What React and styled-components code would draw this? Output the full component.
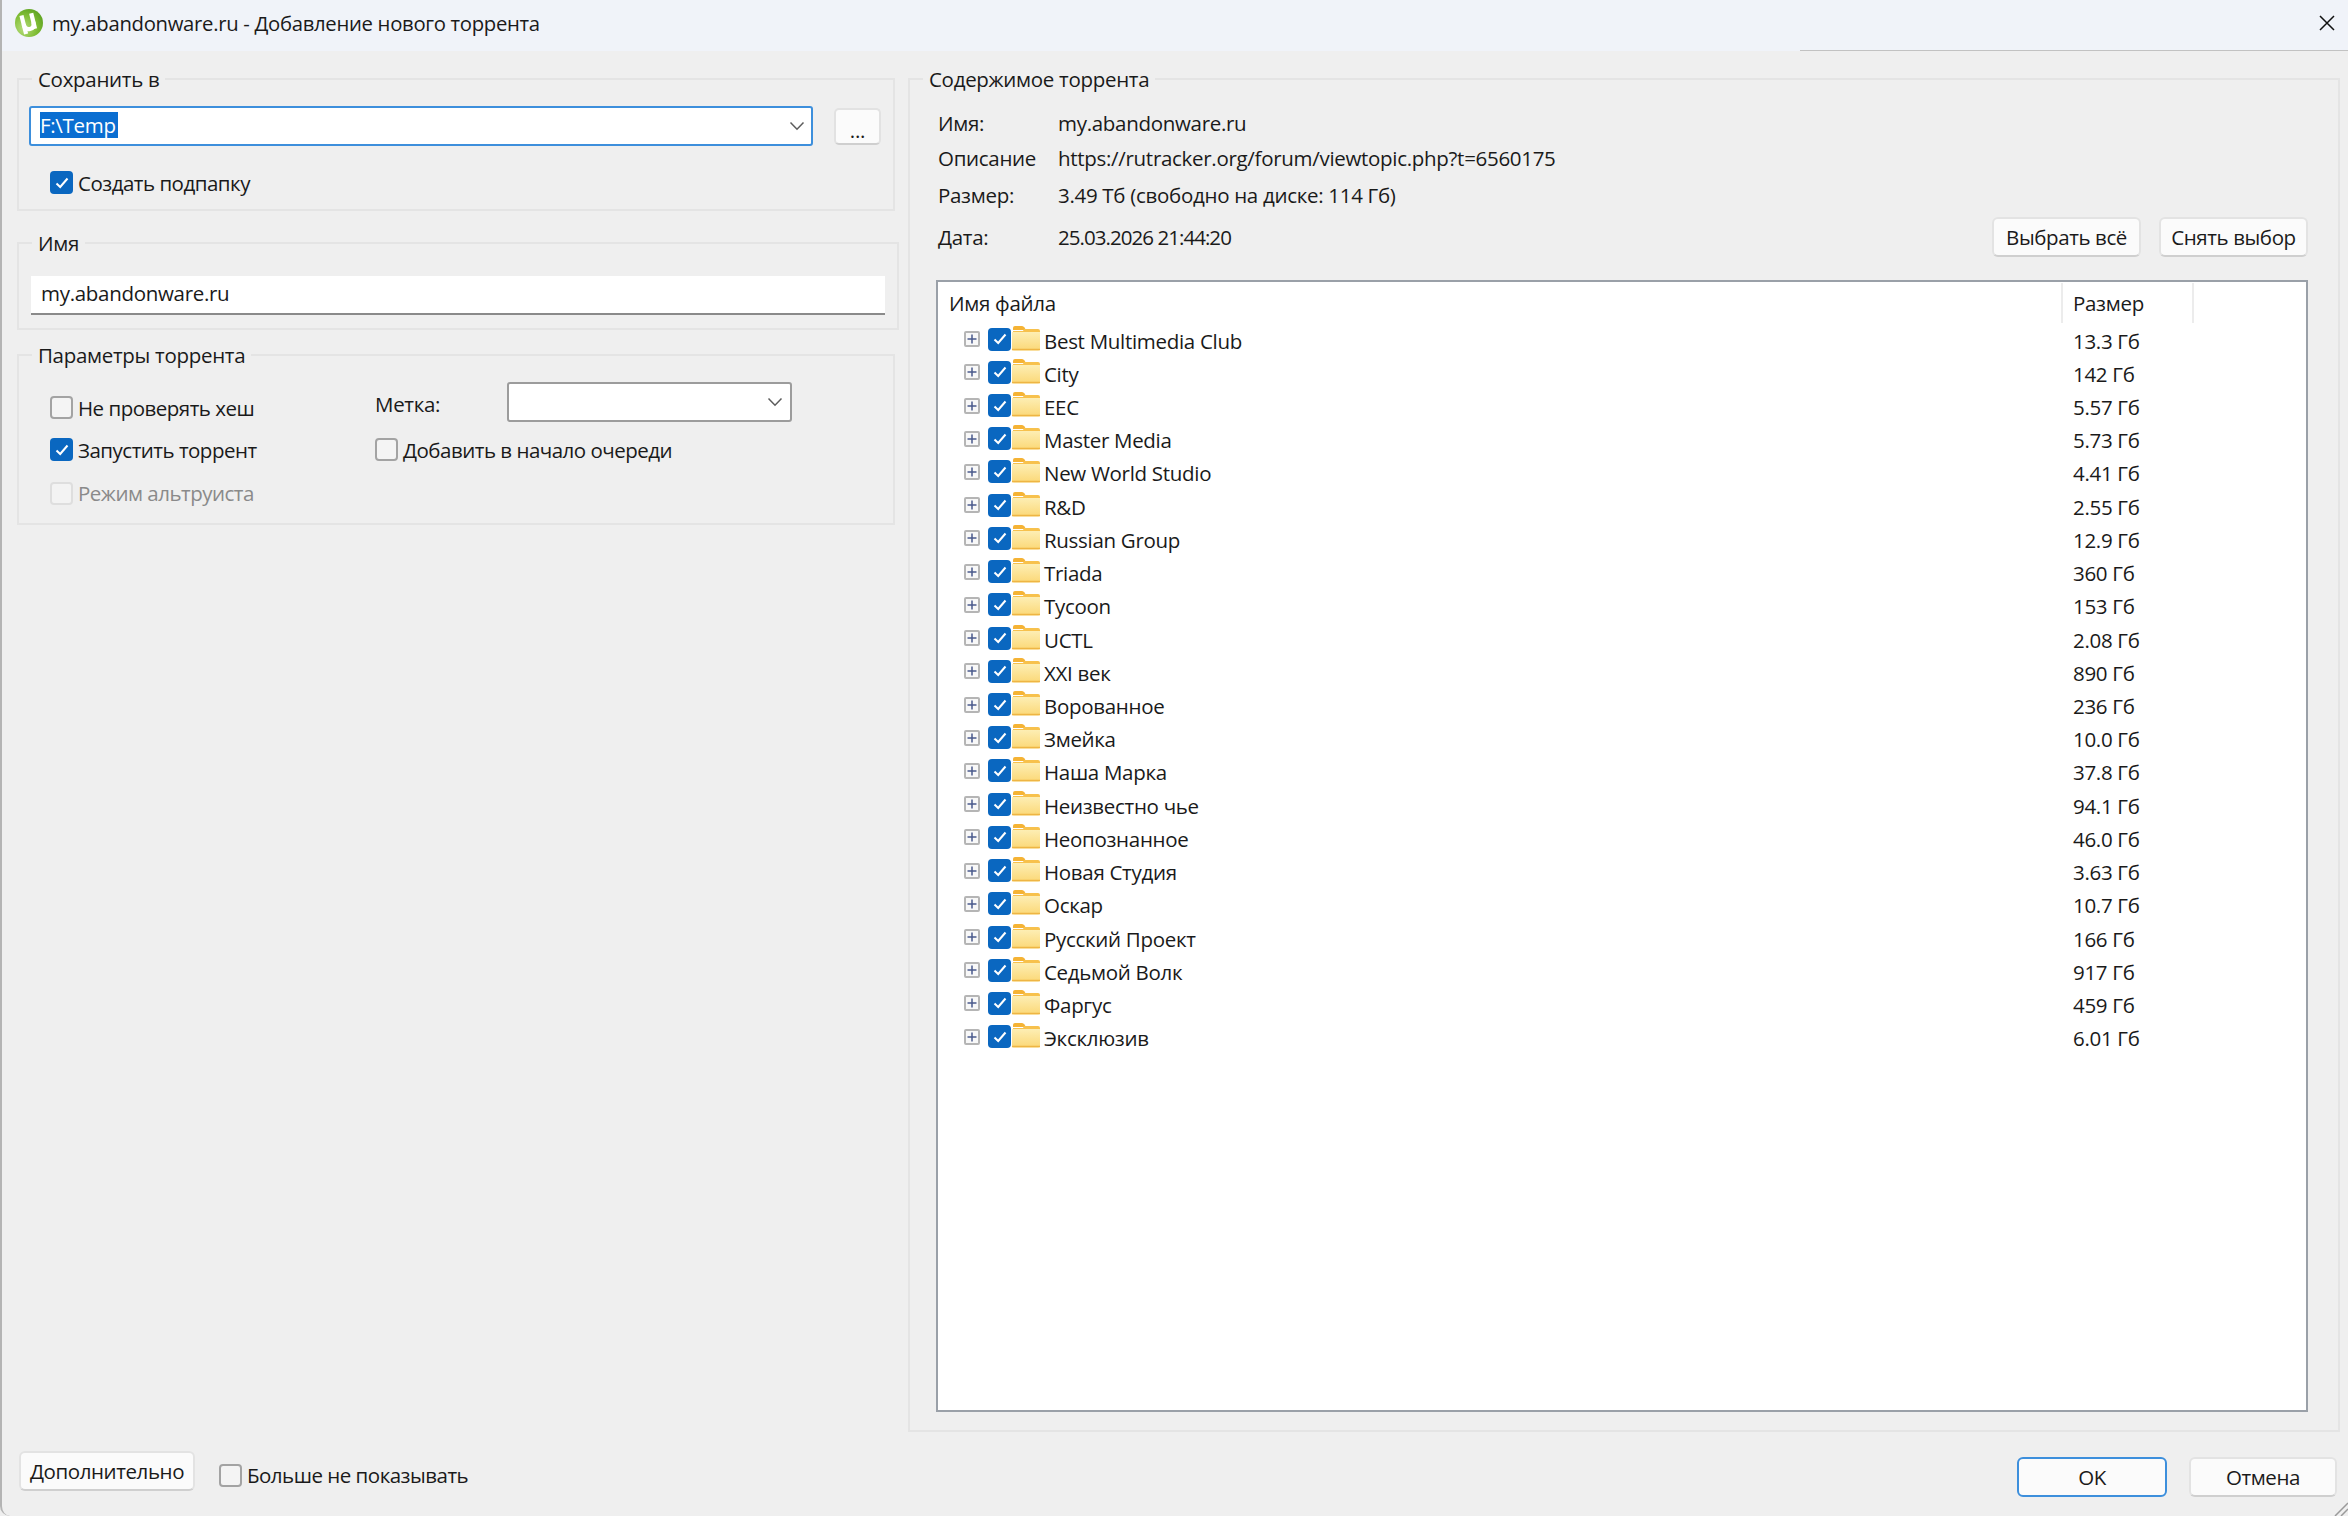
import React from "react";
import styled, { createGlobalStyle } from "styled-components";

const FONT = `"Open Sans", "Noto Sans", "Liberation Sans", sans-serif`;

const Global = createGlobalStyle`
  html, body { margin: 0; padding: 0; background: #efefef; }
  body { font-family: ${FONT}; font-size: 20.5px; letter-spacing: -0.3px; color: #1a1a1a; }
  * { box-sizing: border-box; }
`;

const Win = styled.div`
  width: 2348px; height: 1516px; display: flex; flex-direction: column;
  background: #efefef; border-left: 2px solid #b4b4b4; border-bottom-left-radius: 10px; overflow: hidden; position: relative;
`;
const TitleBar = styled.header`
  height: 51px; flex: none; background: #f0f3f9; display: flex; align-items: center;
  padding: 0 12px 0 13px; gap: 9px; position: relative;
  &::after { content: ""; position: absolute; right: 0; bottom: 0; width: 548px; height: 1px; background: #c2c2c2; }
`;
const Title = styled.div`flex: 1; font-size: 20.3px; margin-top: -5px;`;
const LogoIcon = styled.svg`margin-top: -6px; flex: none;`;
const CloseIcon = styled.svg`margin-top: -6px;`;
const Main = styled.div`flex: 1; display: flex; min-height: 0; padding: 15px 8px 0 15px; gap: 7px;`;
const LeftCol = styled.div`width: 884px; flex: none; display: flex; flex-direction: column;`;
const Frame = styled.fieldset`
  margin: ${p => p.$mt || 0}px 0 0; min-width: 0; border: 2px solid #e4e4e4; padding: 0;
  height: ${p => p.$h}px; width: ${p => p.$w ? p.$w + "px" : "auto"}; flex: ${p => p.$grow ? "1" : "none"};
  display: flex; flex-direction: column; position: relative;
`;
const Legend = styled.legend`
  margin-left: 13px; padding: 0 6px; line-height: 26px; height: 26px;
`;
const SaveRow = styled.div`display: flex; align-items: center; padding: 14px 12px 0 10px; gap: 21px;`;
const ComboBox = styled.div`
  width: 784px; height: 40px; background: #fff; border: 2px solid #3d8fdc; border-radius: 3px;
  display: flex; align-items: center; justify-content: space-between; padding: 0 6px 0 9px;
`;
const Selected = styled.span`background: #0a6ed1; color: #fff; line-height: 26px; display: inline-block; width: 78px; margin-bottom: 2px;`;
const Chevron = () => (
  <svg width="16" height="10" viewBox="0 0 16 10" fill="none" stroke="#5c5c5c" strokeWidth="1.5">
    <path d="M1.5 1.5 L8 8.2 L14.5 1.5" />
  </svg>
);
const SmallBtn = styled.button`
  font: inherit; letter-spacing: inherit; width: 47px; height: 37px; background: #fbfbfb; border: 2px solid #e2e2e2; border-bottom-color: #cfcfcf;
  border-radius: 5px; padding: 6px 0 0; color: #1a1a1a;
`;
const CheckRow = styled.label`
  display: flex; align-items: center; gap: 5px; height: 23px; letter-spacing: -0.5px; color: ${p => p.$off ? "#8a8a8a" : "inherit"};
`;
const BoxOuter = styled.span`
  width: 23px; height: 23px; flex: none; border-radius: 4px; display: flex; align-items: center; justify-content: center;
  background: ${p => p.$on ? "#0a67c0" : p.$off ? "#f3f3f3" : "#f4f4f4"};
  border: ${p => p.$on ? "none" : p.$off ? "2px solid #dedede" : "2px solid #a3a3a3"};
`;
const Box = ({ on, off }) => (
  <BoxOuter $on={on} $off={off}>
    {on && (
      <svg width="16" height="14" viewBox="0 0 16 14" fill="none" stroke="#fff" strokeWidth="2">
        <path d="M2.5 7.5 L6.2 11 L13.5 2.5" />
      </svg>
    )}
  </BoxOuter>
);
const Check = ({ on, off, children }) => (
  <CheckRow $off={off}><Box on={on} off={off} />{children}</CheckRow>
);
const SubRow = styled.div`padding: 25px 0 0 31px;`;
const NameInput = styled.div`
  margin: 20px 12px 0 12px; height: 39px; background: #fff; border-bottom: 2px solid #8a8a8a;
  display: flex; align-items: center; padding: 0 10px 3px;
`;
const OptionsGrid = styled.div`
  display: grid; grid-template-columns: 325px 1fr; grid-template-rows: 42px 44px 43px; padding: 13px 0 0 31px;
`;
const OptCell = styled.div`display: flex; align-items: center; padding-top: ${p => p.$pt}px;`;
const LabelCell = styled.div`display: flex; align-items: center;`;
const LabelText = styled.span`width: 132px; padding-top: 4px;`;
const SelectBox = styled.div`
  width: 285px; height: 40px; background: #fff; border: 2px solid #9c9c9c; border-radius: 3px; margin-top: -1px;
  display: flex; align-items: center; justify-content: flex-end; padding-right: 7px;
`;
const RightFrameBody = styled.div`flex: 1; display: flex; flex-direction: column; padding: 0 30px 18px 27px; min-height: 0;`;
const InfoTop = styled.div`display: flex; flex-direction: column; height: 188px; padding-top: 14px; flex: none;`;
const InfoRow = styled.div`display: flex; align-items: center; height: ${p => p.$h}px; padding-left: 1px;`;
const InfoLabel = styled.div`width: 120px;`;
const DateValue = styled.span`letter-spacing: -0.95px;`;
const Spacer = styled.div`flex: 1;`;
const Btn = styled.button`
  font: inherit; letter-spacing: -0.4px; color: #1a1a1a; background: #fbfbfb; width: ${p => p.$w}px; height: 40px; padding: 0;
  border: 2px solid ${p => p.$primary ? "#3d8fdc" : "#e3e3e3"}; border-bottom-color: ${p => p.$primary ? "#3d8fdc" : "#cfcfcf"}; border-radius: 6px;
`;
const BtnGap = styled.div`display: flex; gap: 18px;`;
const Tree = styled.div`
  flex: 1; background: #fff; border: 2px solid #9aa0a8; min-height: 0; display: flex; flex-direction: column; margin-left: -1px;
`;
const TreeHead = styled.div`display: grid; grid-template-columns: 1125px 131px 1fr; height: 40px; flex: none; margin-top: 1px;`;
const HeadCell = styled.div`
  display: flex; align-items: center; padding-left: ${p => p.$pl}px;
  border-right: ${p => p.$line ? "2px solid #ececec" : "none"};
`;
const TreeRows = styled.div`display: flex; flex-direction: column; padding-top: 1px;`;
const Row = styled.div`display: grid; grid-template-columns: 1126px 1fr; height: 33.22px; align-items: center;`;
const NameCell = styled.div`display: flex; align-items: center; padding-left: 26px;`;
const Expander = styled.span`
  width: 16px; height: 16px; flex: none; border: 2px solid #b5b5b5; border-radius: 2px; background: #f8f8f8; margin-right: 8px;
  display: flex; align-items: center; justify-content: center; margin-top: -3px;
`;
const TreeCheck = styled.span`display: flex; margin-top: -3px; margin-right: 1px;`;
const FolderWrap = styled.span`display: flex; margin-right: 4px; margin-top: -6px;`;
const SizeCell = styled.div`padding-left: 9px;`;
const Footer = styled.footer`
  height: 84px; flex: none; display: flex; align-items: flex-start; padding: 19px 11px 0 17px; position: relative;
`;
const FootLeft = styled.div`display: flex; align-items: center; gap: 24px; flex: 1;`;
const FootCheck = styled.div`margin-top: 8px;`;
const FootRight = styled.div`display: flex; gap: 22px; margin-top: 6px;`;
const Grip = styled.svg`position: absolute; right: 0; bottom: 0;`;

const Plus = () => (
  <svg width="10" height="10" viewBox="0 0 10 10" fill="none" stroke="#4a5a8c" strokeWidth="1.5">
    <path d="M5 0.5 V9.5 M0.5 5 H9.5" />
  </svg>
);
const Folder = () => (
  <svg width="28" height="26" viewBox="0 0 28 26">
    <defs>
      <linearGradient id="fg" x1="0" y1="0" x2="0" y2="1">
        <stop offset="0" stopColor="#fdeeb4" />
        <stop offset="1" stopColor="#fbd877" />
      </linearGradient>
    </defs>
    <path d="M1 3 Q1 1 3 1 H10 Q11.5 1 12.5 2.5 L14 5 H1 Z" fill="#f5b335" />
    <path d="M12 4 H26 Q28 4 28 6 V8 H1 V6 H11 Z" fill="#f7c14d" />
    <path d="M0 7 H28 V24 Q28 25.5 26 25.5 H2 Q0 25.5 0 24 Z" fill="url(#fg)" />
    <path d="M0 24.5 H28" stroke="#eeb544" strokeWidth="1.5" />
  </svg>
);
const Logo = () => (
  <LogoIcon width="28" height="28" viewBox="0 0 28 28">
    <defs>
      <radialGradient id="lg" cx="0.3" cy="0.7" r="0.8">
        <stop offset="0" stopColor="#b5dc7a" />
        <stop offset="0.6" stopColor="#80bd35" />
        <stop offset="1" stopColor="#5ea323" />
      </radialGradient>
    </defs>
    <circle cx="14" cy="14" r="14" fill="url(#lg)" />
    <g transform="rotate(-14 14 14)" fill="none" stroke="#fff" strokeWidth="4.2">
      <path d="M8.5 5 V24" />
      <path d="M8.5 14 Q8.5 20 13.5 20 Q18.5 20 18.5 14" />
      <path d="M18.5 5 V21" />
    </g>
  </LogoIcon>
);

const rows = [
  ["Best Multimedia Club", "13.3 Гб"], ["City", "142 Гб"], ["EEC", "5.57 Гб"], ["Master Media", "5.73 Гб"],
  ["New World Studio", "4.41 Гб"], ["R&D", "2.55 Гб"], ["Russian Group", "12.9 Гб"], ["Triada", "360 Гб"],
  ["Tycoon", "153 Гб"], ["UCTL", "2.08 Гб"], ["XXI век", "890 Гб"], ["Ворованное", "236 Гб"],
  ["Змейка", "10.0 Гб"], ["Наша Марка", "37.8 Гб"], ["Неизвестно чье", "94.1 Гб"], ["Неопознанное", "46.0 Гб"],
  ["Новая Студия", "3.63 Гб"], ["Оскар", "10.7 Гб"], ["Русский Проект", "166 Гб"], ["Седьмой Волк", "917 Гб"],
  ["Фаргус", "459 Гб"], ["Эксклюзив", "6.01 Гб"],
];

export default function App() {
  return (
    <>
      <Global />
      <Win>
        <TitleBar>
          <Logo />
          <Title>my.abandonware.ru - Добавление нового торрента</Title>
          <CloseIcon width="18" height="18" viewBox="0 0 18 18" stroke="#111" strokeWidth="1.5" fill="none">
            <path d="M2 2 L16 16 M16 2 L2 16" />
          </CloseIcon>
        </TitleBar>
        <Main>
          <LeftCol>
            <Frame $h={145} $w={878}>
              <Legend>Сохранить в</Legend>
              <SaveRow>
                <ComboBox><Selected>F:\Temp</Selected><Chevron /></ComboBox>
                <SmallBtn>...</SmallBtn>
              </SaveRow>
              <SubRow><Check on>Создать подпапку</Check></SubRow>
            </Frame>
            <Frame $mt={19} $h={100} $w={882}>
              <Legend>Имя</Legend>
              <NameInput>my.abandonware.ru</NameInput>
            </Frame>
            <Frame $mt={12} $h={183} $w={878}>
              <Legend>Параметры торрента</Legend>
              <OptionsGrid>
                <OptCell $pt={11}><Check>Не проверять хеш</Check></OptCell>
                <LabelCell><LabelText>Метка:</LabelText><SelectBox><Chevron /></SelectBox></LabelCell>
                <OptCell $pt={9}><Check on>Запустить торрент</Check></OptCell>
                <OptCell $pt={9}><Check>Добавить в начало очереди</Check></OptCell>
                <OptCell $pt={9}><Check off>Режим альтруиста</Check></OptCell>
              </OptionsGrid>
            </Frame>
          </LeftCol>
          <Frame $grow>
            <Legend>Содержимое торрента</Legend>
            <RightFrameBody>
              <InfoTop>
                <InfoRow $h={34}><InfoLabel>Имя:</InfoLabel>my.abandonware.ru</InfoRow>
                <InfoRow $h={36}><InfoLabel>Описание</InfoLabel>https://rutracker.org/forum/viewtopic.php?t=6560175</InfoRow>
                <InfoRow $h={38}><InfoLabel>Размер:</InfoLabel>3.49 Тб (свободно на диске: 114 Гб)</InfoRow>
                <InfoRow $h={46}>
                  <InfoLabel>Дата:</InfoLabel><DateValue>25.03.2026 21:44:20</DateValue>
                  <Spacer />
                  <BtnGap>
                    <Btn $w={149}>Выбрать всё</Btn>
                    <Btn $w={149}>Снять выбор</Btn>
                  </BtnGap>
                </InfoRow>
              </InfoTop>
              <Tree>
                <TreeHead>
                  <HeadCell $pl={11} $line>Имя файла</HeadCell>
                  <HeadCell $pl={10} $line>Размер</HeadCell>
                  <HeadCell />
                </TreeHead>
                <TreeRows>
                  {rows.map(([n, s]) => (
                    <Row key={n}>
                      <NameCell>
                        <Expander><Plus /></Expander>
                        <TreeCheck><Box on /></TreeCheck>
                        <FolderWrap><Folder /></FolderWrap>
                        {n}
                      </NameCell>
                      <SizeCell>{s}</SizeCell>
                    </Row>
                  ))}
                </TreeRows>
              </Tree>
            </RightFrameBody>
          </Frame>
        </Main>
        <Footer>
          <FootLeft>
            <Btn $w={176}>Дополнительно</Btn>
            <FootCheck><Check>Больше не показывать</Check></FootCheck>
          </FootLeft>
          <FootRight>
            <Btn $w={150} $primary>OK</Btn>
            <Btn $w={148}>Отмена</Btn>
          </FootRight>
          <Grip width="14" height="14" viewBox="0 0 14 14" stroke="#9a9a9a" strokeWidth="1.5">
            <path d="M14 1 L1 14 M14 7 L7 14" />
          </Grip>
        </Footer>
      </Win>
    </>
  );
}
